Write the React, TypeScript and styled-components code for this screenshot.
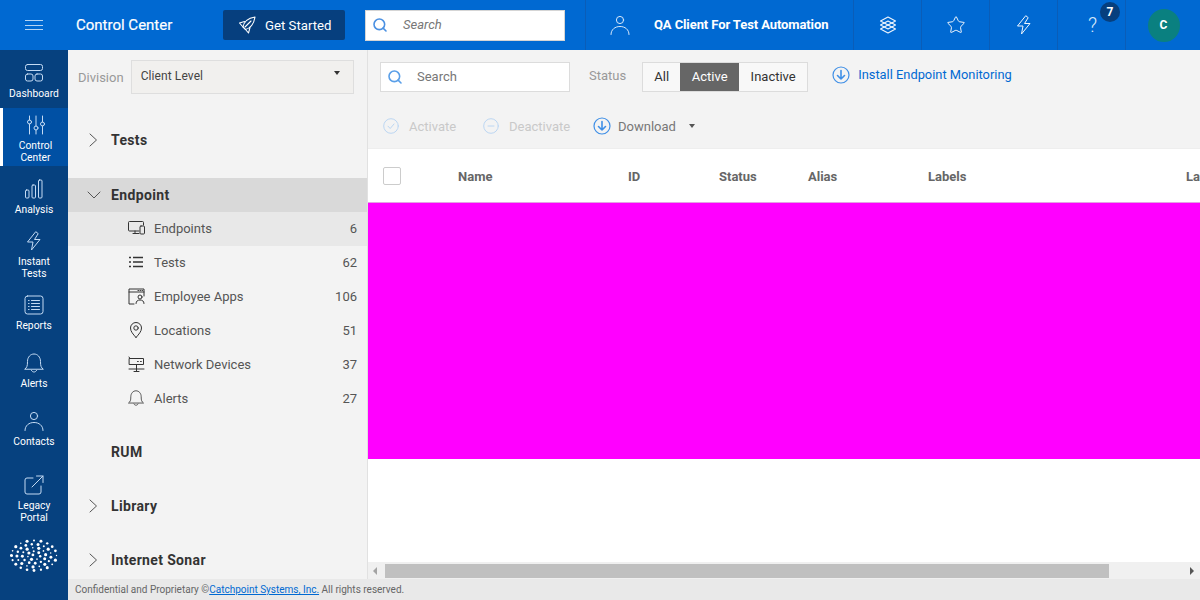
import React from 'react';
import styled, { createGlobalStyle } from 'styled-components';
import { Search, Star } from 'lucide-react';

const GlobalStyle = createGlobalStyle`
  html, body { margin: 0; padding: 0; height: 100%; overflow: hidden; }
  body { font-family: Roboto, "Liberation Sans", sans-serif; font-size: 13px; color: #333; }
  * { box-sizing: border-box; }
`;

const lineProps = { fill: 'none', stroke: 'currentColor', strokeWidth: 1, strokeLinecap: 'round' as const, strokeLinejoin: 'round' as const };

const DashboardIcon = () => (
  <svg width="20" height="20" viewBox="0 0 20 20" {...lineProps}>
    <rect x="1.5" y="1.5" width="17" height="6" rx="2" />
    <rect x="1.5" y="11" width="7.5" height="7" rx="2" />
    <rect x="11" y="11" width="7.5" height="7" rx="2" />
  </svg>
);
const SlidersIcon = () => (
  <svg width="20" height="20" viewBox="0 0 20 20" {...lineProps}>
    <path d="M3.5 1v4M3.5 9v10M10 1v10M10 15v4M16.5 1v6M16.5 11v8" />
    <circle cx="3.5" cy="7" r="2" />
    <circle cx="10" cy="13" r="2" />
    <circle cx="16.5" cy="9" r="2" />
  </svg>
);
const BarsIcon = () => (
  <svg width="20" height="20" viewBox="0 0 20 20" {...lineProps}>
    <rect x="1.5" y="11" width="3.5" height="8" rx="1" />
    <rect x="8" y="6" width="3.5" height="13" rx="1" />
    <rect x="14.5" y="1" width="3.5" height="18" rx="1" />
  </svg>
);
const BoltIcon = () => (
  <svg width="20" height="20" viewBox="0 0 20 20" {...lineProps}>
    <path d="M11.5 1 3.5 11h5.500l-1.500 8 8.500-10.500h-5.500L14 3z" />
  </svg>
);
const ReportIcon = () => (
  <svg width="20" height="20" viewBox="0 0 20 20" {...lineProps}>
    <rect x="1" y="1" width="18" height="18" rx="2.500" />
    <path d="M7.500 5.500h8M7.500 8.500h8M7.500 11.500h8M7.500 14.500h8M4.500 5.500h.6M4.500 8.500h.6M4.500 11.500h.6M4.500 14.500h.6" />
  </svg>
);
const BellIcon = ({ size = 20 }: { size?: number }) => (
  <svg width={size} height={size} viewBox="0 0 20 20" {...lineProps}>
    <path d="M1 16c2-1.500 2.500-3 2.500-7.500C3.500 4 6.500 1 10 1s6.500 3 6.500 7.500c0 4.500.5 6 2.500 7.500z" />
    <path d="M7.500 17.500c.5 1 1.500 1.500 2.500 1.500s2-.5 2.500-1.500" />
  </svg>
);
const UserIcon = ({ size = 20 }: { size?: number }) => (
  <svg width={size} height={size} viewBox="0 0 20 20" {...lineProps}>
    <circle cx="10" cy="5" r="3.600" />
    <path d="M1 19.500c0-5 4-8 9-8s9 3 9 8" />
  </svg>
);
const ExternalIcon = () => (
  <svg width="20" height="20" viewBox="0 0 20 20" {...lineProps}>
    <path d="M9 3H3a2 2 0 0 0-2 2v12a2 2 0 0 0 2 2h12a2 2 0 0 0 2-2v-6" />
    <path d="M8 12 19 1M12.500 1H19v6.500" />
  </svg>
);
const RocketIcon = () => (
  <svg width="18" height="18" viewBox="0 0 18 18" {...lineProps} strokeWidth={1.1}>
    <path d="M17 1C11 2 6 5 5 11l2.500 2.500C13 12 16 7 17 1z" />
    <path d="M6.500 5.500 1.500 7 5 11M12 11.500 10.500 17l-3-3.500M13 5l-6 6" />
  </svg>
);
const LayersIcon = () => (
  <svg width="18" height="18" viewBox="0 0 18 18" {...lineProps} strokeWidth={1.1}>
    <path d="M9 1 16.500 5 9 9 1.500 5z" />
    <path d="M9 5 16.500 9 9 13 1.500 9z" />
    <path d="M9 9 16.500 13 9 17 1.500 13z" />
  </svg>
);
const DeviceIcon = () => (
  <svg width="17" height="14" viewBox="0 0 17 14" {...lineProps}>
    <path d="M11 10H1.500a1 1 0 0 1-1-1V1.500a1 1 0 0 1 1-1h13a1 1 0 0 1 1 1V4M5 12.500h6M7 10v2.500" />
    <rect x="12" y="5" width="4.500" height="8" rx="1" />
  </svg>
);
const ListIcon = () => (
  <svg width="16" height="12" viewBox="0 0 16 12" fill="none" stroke="currentColor" strokeWidth="1.5">
    <path d="M1 1.500h2M5 1.500h10M1 6h2M5 6h10M1 10.500h2M5 10.500h10" />
  </svg>
);
const AppsIcon = () => (
  <svg width="17" height="17" viewBox="0 0 17 17" {...lineProps}>
    <path d="M16 8V1H1v15h5M1 4h15M10 2.500h.5M12 2.500h.5M14 2.500h.5" />
    <circle cx="12" cy="9" r="2" />
    <path d="M8 15.500c0-2.500 1.800-3.500 4-3.500s4 1 4 3.500" />
  </svg>
);
const PinIcon = () => (
  <svg width="16" height="16" viewBox="0 0 16 16" {...lineProps}>
    <path d="M8 15.500C5 12 2.500 9.500 2.500 6a5.500 5.500 0 0 1 11 0c0 3.500-2.500 6-5.500 9.500z" />
    <circle cx="8" cy="6" r="2.200" />
  </svg>
);
const NetworkIcon = () => (
  <svg width="17" height="17" viewBox="0 0 17 17" {...lineProps}>
    <rect x="1.500" y="2.500" width="14" height="6" />
    <path d="M9.500 5.500h.8M12.500 5.500h.8M8.500 8.500V15M1 13h15M6 15.500h5M2 2.500 1 1" />
  </svg>
);
const RightChevron = () => (
  <svg width="12" height="14" viewBox="0 0 12 14" {...lineProps}>
    <path d="M3 1l6.500 6L3 13" />
  </svg>
);
const DownChevron = () => (
  <svg width="14" height="14" viewBox="0 0 14 14" {...lineProps}>
    <path d="M1 4l6 6 6-6" />
  </svg>
);
const DownCircleIcon = () => (
  <svg width="18" height="18" viewBox="0 0 18 18" fill="none" stroke="#3f8fe6" strokeLinecap="round" strokeLinejoin="round">
    <circle cx="9" cy="9" r="8" strokeWidth="1.200" />
    <path d="M9 4.500v8.500M5.500 9.500 9 13l3.500-3.500" strokeWidth="1.600" />
  </svg>
);

const rings = [
  { radius: 1, count: 20 },
  { radius: 0.76, count: 17 },
  { radius: 0.52, count: 12 },
  { radius: 0.28, count: 7 },
  { radius: 0.06, count: 1 },
];

const dots = rings.flatMap((ring, ringIndex) =>
  Array.from({ length: ring.count }, (_, i) => {
    const t = ((i + ringIndex * 0.4) / ring.count) * Math.PI * 2;
    return {
      cx: 24 + Math.cos(t) * ring.radius * 22.500,
      cy: 16.5 + Math.sin(t) * ring.radius * 15,
      r: 0.7 + 0.9 * Math.abs(Math.sin(i * 1.7 + ringIndex)),
    };
  }),
);

const LogoMark = () => (
  <svg width="48" height="33" viewBox="0 0 48 33" fill="#fff">
    {dots.map((d, i) => <circle key={i} cx={d.cx} cy={d.cy} r={d.r} />)}
  </svg>
);

const Page = styled.div`
  width: 1200px;
  height: 600px;
  display: grid;
  grid-template-rows: 50px 1fr;
  overflow: hidden;
`;

const TopBar = styled.header`
  display: flex;
  align-items: center;
  background: #0069d2;
  color: #fff;
`;

const MenuButton = styled.div`
  width: 68px;
  display: flex;
  flex-direction: column;
  gap: 3.500px;
  padding-left: 25px;
  span { display: block; width: 18px; height: 1px; background: #b5d4f4; }
`;

const Title = styled.div`
  width: 147px;
  padding: 0 0 1px 8px;
  font-size: 15px;
  font-weight: 400;
  -webkit-text-stroke: 0.2px #fff;
`;

const StartButton = styled.div`
  width: 122px;
  height: 30px;
  margin-left: 8px;
  border-radius: 2px;
  background: #063f7e;
  display: flex;
  align-items: center;
  padding-left: 15px;
  gap: 9px;
  font-size: 13.2px;
`;

const TopSearch = styled.div`
  width: 200px;
  height: 31px;
  margin-left: 20px;
  background: #fff;
  border: 1px solid #d5d5d5;
  display: flex;
  align-items: center;
  padding: 0 0 1px 6px;
  gap: 15px;
  color: #777;
  font-style: italic;
  font-size: 13px;
  svg { color: #4a90e2; }
`;

const ClientCell = styled.div`
  width: 268px;
  height: 50px;
  margin-left: 20px;
  border-left: 1px solid #0a5db8;
  display: flex;
  align-items: center;
  padding: 0 0 1px 24px;
  gap: 24px;
  font-size: 13px;
  font-weight: 700;
  letter-spacing: -0.1px;
  white-space: nowrap;
  svg { color: #d8e8fa; }
`;

const TopCell = styled.div`
  position: relative;
  width: 68px;
  height: 50px;
  border-left: 1px solid #0a5db8;
  display: flex;
  align-items: center;
  justify-content: center;
  color: #eef5fd;
  font-size: 20px;
  font-weight: 300;
`;

const HelpMark = styled.span`
  margin-left: 2px;
  color: #d8e8fa;
`;

const CountBadge = styled.span`
  position: absolute;
  top: 2px;
  left: 42px;
  width: 20px;
  height: 20px;
  border-radius: 50%;
  background: #063f7e;
  color: #fff;
  font-size: 12px;
  font-weight: 700;
  display: flex;
  align-items: center;
  justify-content: center;
`;

const Avatar = styled.span`
  width: 32px;
  height: 33px;
  margin-left: 8px;
  border-radius: 50%;
  background: #0a8080;
  color: #fff;
  font-size: 12px;
  font-weight: 700;
  display: flex;
  align-items: center;
  justify-content: center;
`;

const Body = styled.div`
  display: grid;
  grid-template-columns: 68px 1fr;
  min-height: 0;
`;

const SideNav = styled.nav`
  background: #06417f;
  display: flex;
  flex-direction: column;
  min-height: 0;
`;

const NavClip = styled.div`
  height: 396px;
  overflow: hidden;
  flex: none;
`;

const NavItem = styled.div<{ $active?: boolean }>`
  height: 58px;
  padding-top: 5px;
  display: flex;
  flex-direction: column;
  align-items: center;
  justify-content: center;
  background: ${(p) => (p.$active ? '#0050a4' : 'transparent')};
  border-left: ${(p) => (p.$active ? '3px solid #fff' : '0')};
  color: #fff;
  font-size: 10.300px;
  line-height: 12px;
  text-align: center;
  svg { color: #c4dbf4; margin-bottom: 5px; }
`;

const LegacyItem = styled(NavItem)`
  margin-top: 22px;
`;

const LogoBox = styled.div`
  margin-top: 13px;
  display: flex;
  justify-content: center;
`;

const RightSide = styled.div`
  display: grid;
  grid-template-rows: 1fr 21px;
  min-height: 0;
  min-width: 0;
`;

const Columns = styled.div`
  display: grid;
  grid-template-columns: 300px 832px;
  min-height: 0;
  overflow: hidden;
`;

const TreePanel = styled.aside`
  background: #f3f3f3;
  border-right: 1px solid #e1e1e1;
  overflow: hidden;
`;

const DivisionRow = styled.div`
  display: flex;
  align-items: center;
  gap: 7px;
  padding: 10px 13px 0 10px;
  color: #999;
  font-size: 13px;
`;

const DivisionSelect = styled.div`
  flex: 1;
  height: 34px;
  background: #f1f0ee;
  border: 1px solid #dedede;
  color: #444;
  font-size: 12px;
  display: flex;
  justify-content: space-between;
  padding: 8px 13px 0 9px;
  letter-spacing: 0.1px;
`;

const Caret = styled.span`
  display: inline-block;
  width: 0;
  height: 0;
  margin-top: 2px;
  border-left: 3px solid transparent;
  border-right: 3px solid transparent;
  border-top: 4px solid #333;
`;

const Tree = styled.div`
  margin-top: 19px;
`;

const TopRow = styled.div<{ $open?: boolean }>`
  height: ${(p) => (p.$open ? '34px' : '54px')};
  margin-top: ${(p) => (p.$open ? '11px' : '0')};
  padding-bottom: ${(p) => (p.$open ? '1px' : '0')};
  background: ${(p) => (p.$open ? '#d9d9d9' : 'transparent')};
  display: grid;
  grid-template-columns: 24px 1fr;
  align-items: center;
  padding-left: 19px;
  color: #333;
  font-size: 14px;
  font-weight: 700;
  letter-spacing: 0.35px;
  svg { color: #555; display: block; }
`;

const PlainRow = styled(TopRow)`
  grid-template-columns: 1fr;
  padding-left: 43px;
  margin-top: 9px;
`;

const SubRow = styled.div<{ $selected?: boolean }>`
  height: 34px;
  background: ${(p) => (p.$selected ? '#e8e8e8' : 'transparent')};
  display: grid;
  grid-template-columns: 26px 1fr auto;
  align-items: center;
  padding: 0 10px 2px 60px;
  color: #555;
  font-size: 13px;
  svg { color: #333; display: block; }
`;

const MainPanel = styled.main`
  display: flex;
  flex-direction: column;
  min-height: 0;
  min-width: 0;
  background: #fff;
`;

const Toolbar = styled.div`
  height: 99px;
  flex: none;
  background: #f3f3f3;
  border-bottom: 1px solid #eee;
  padding: 12px 0 0 12px;
`;

const ToolRow = styled.div`
  display: flex;
  align-items: center;
  height: 30px;
`;

const ToolSearch = styled.div`
  width: 190px;
  height: 30px;
  background: #fff;
  border: 1px solid #dcdcdc;
  display: flex;
  align-items: center;
  padding: 0 0 1px 6px;
  gap: 14px;
  color: #777;
  font-size: 13px;
  svg { color: #5a9fe8; }
`;

const StatusLabel = styled.span`
  margin: 0 16px 3px 19px;
  color: #999;
`;

const Segment = styled.div`
  display: flex;
  height: 30px;
  border: 1px solid #dcdcdc;
  background: #f8f8f8;
`;

const SegmentItem = styled.div<{ $on?: boolean; $w: number }>`
  width: ${(p) => p.$w}px;
  padding-bottom: 2px;
  display: flex;
  align-items: center;
  justify-content: center;
  background: ${(p) => (p.$on ? '#666' : 'transparent')};
  color: ${(p) => (p.$on ? '#fff' : '#333')};
  font-size: 13px;
`;

const InstallLink = styled.a`
  margin: -5px 0 0 24px;
  display: flex;
  align-items: center;
  gap: 8px;
  color: #0069d2;
  font-size: 12.850px;
`;

const ActionRow = styled(ToolRow)`
  margin-top: 19px;
  padding-left: 3px;
`;

const Action = styled.div<{ $off?: boolean; $w: number }>`
  width: ${(p) => p.$w}px;
  display: flex;
  align-items: center;
  gap: ${(p) => (p.$off ? '10px' : '7px')};
  color: ${(p) => (p.$off ? '#c9c9c9' : '#777')};
  font-size: 13px;
  svg { flex: none; }
`;

const RoundIcon = styled.svg`
  color: #bcd6f2;
`;

const DownCaret = styled(Caret)`
  border-top-color: #555;
  margin: 0 0 0 6px;
`;

const TableHead = styled.div`
  height: 53px;
  flex: none;
  padding-top: 1px;
  display: grid;
  grid-template-columns: 15px 75px 170px 91px 89px 120px 258px 40px;
  align-items: center;
  color: #666;
  font-weight: 700;
  font-size: 13px;
  white-space: nowrap;
  overflow: hidden;
`;

const CheckBox = styled.span`
  grid-column: 2;
  width: 18px;
  height: 18px;
  background: #fff;
  border: 1px solid #ccc;
  border-radius: 2px;
`;

const MaskedRows = styled.div`
  height: 257px;
  flex: none;
  background: #ff00ff;
  border-top: 1px solid #e3a3e3;
`;

const EmptyArea = styled.div`
  flex: 1;
`;

const ScrollTrack = styled.div`
  height: 17px;
  flex: none;
  background: #f0f0f0;
  display: flex;
  align-items: center;
  padding-left: 5px;
`;

const ScrollArrow = styled.span<{ $right?: boolean }>`
  width: 0;
  height: 0;
  border-top: 4px solid transparent;
  border-bottom: 4px solid transparent;
  ${(p) => (p.$right ? 'border-left: 4px solid #555; margin-left: 81px;' : 'border-right: 4px solid #a3a3a3;')}
`;

const ScrollThumb = styled.div`
  width: 724px;
  height: 14px;
  margin-left: 8px;
  background: #c0c0c0;
`;

const Footer = styled.footer`
  background: #e9e9e9;
  color: #666;
  font-size: 10px;
  display: flex;
  align-items: center;
  padding-left: 7px;
  white-space: pre;
  a { color: #0069d2; text-decoration: underline; }
`;

const subRows = [
  { label: 'Endpoints', count: 6, icon: <DeviceIcon /> },
  { label: 'Tests', count: 62, icon: <ListIcon /> },
  { label: 'Employee Apps', count: 106, icon: <AppsIcon /> },
  { label: 'Locations', count: 51, icon: <PinIcon /> },
  { label: 'Network Devices', count: 37, icon: <NetworkIcon /> },
  { label: 'Alerts', count: 27, icon: <BellIcon size={16} /> },
];

export default function App() {
  return (
    <Page>
      <GlobalStyle />
      <TopBar>
        <MenuButton><span /><span /><span /></MenuButton>
        <Title>Control Center</Title>
        <StartButton><RocketIcon />Get Started</StartButton>
        <TopSearch><Search size={16} strokeWidth={2.4} />Search</TopSearch>
        <ClientCell><UserIcon />QA Client For Test Automation</ClientCell>
        <TopCell><LayersIcon /></TopCell>
        <TopCell><Star size={20} strokeWidth={1.2} /></TopCell>
        <TopCell><BoltIcon /></TopCell>
        <TopCell><HelpMark>?</HelpMark><CountBadge>7</CountBadge></TopCell>
        <TopCell><Avatar>C</Avatar></TopCell>
      </TopBar>
      <Body>
        <SideNav>
          <NavClip>
            <NavItem><DashboardIcon />Dashboard</NavItem>
            <NavItem $active><SlidersIcon />Control<br />Center</NavItem>
            <NavItem><BarsIcon />Analysis</NavItem>
            <NavItem><BoltIcon />Instant<br />Tests</NavItem>
            <NavItem><ReportIcon />Reports</NavItem>
            <NavItem><BellIcon />Alerts</NavItem>
            <NavItem><UserIcon />Contacts</NavItem>
          </NavClip>
          <LegacyItem><ExternalIcon />Legacy<br />Portal</LegacyItem>
          <LogoBox><LogoMark /></LogoBox>
        </SideNav>
        <RightSide>
          <Columns>
            <TreePanel>
              <DivisionRow>
                Division
                <DivisionSelect>Client Level<Caret /></DivisionSelect>
              </DivisionRow>
              <Tree>
                <TopRow><RightChevron />Tests</TopRow>
                <TopRow $open><DownChevron />Endpoint</TopRow>
                {subRows.map((row, i) => (
                  <SubRow key={row.label} $selected={i === 0}>
                    {row.icon}
                    <span>{row.label}</span>
                    <span>{row.count}</span>
                  </SubRow>
                ))}
                <PlainRow>RUM</PlainRow>
                <TopRow><RightChevron />Library</TopRow>
                <TopRow><RightChevron />Internet Sonar</TopRow>
              </Tree>
            </TreePanel>
            <MainPanel>
              <Toolbar>
                <ToolRow>
                  <ToolSearch><Search size={16} strokeWidth={2.4} />Search</ToolSearch>
                  <StatusLabel>Status</StatusLabel>
                  <Segment>
                    <SegmentItem $w={37}>All</SegmentItem>
                    <SegmentItem $w={59} $on>Active</SegmentItem>
                    <SegmentItem $w={68}>Inactive</SegmentItem>
                  </Segment>
                  <InstallLink><DownCircleIcon />Install Endpoint Monitoring</InstallLink>
                </ToolRow>
                <ActionRow>
                  <Action $off $w={100}>
                    <RoundIcon width="16" height="16" viewBox="0 0 16 16" {...lineProps}>
                      <circle cx="8" cy="8" r="7.300" />
                      <path d="M5 8.200 7.200 10.500 11 6" />
                    </RoundIcon>
                    Activate
                  </Action>
                  <Action $off $w={110}>
                    <RoundIcon width="16" height="16" viewBox="0 0 16 16" {...lineProps}>
                      <circle cx="8" cy="8" r="7.300" />
                      <path d="M5 8h6" />
                    </RoundIcon>
                    Deactivate
                  </Action>
                  <Action $w={110}>
                    <DownCircleIcon />Download<DownCaret />
                  </Action>
                </ActionRow>
              </Toolbar>
              <TableHead>
                <CheckBox />
                <span>Name</span>
                <span>ID</span>
                <span>Status</span>
                <span>Alias</span>
                <span>Labels</span>
                <span>Last</span>
              </TableHead>
              <MaskedRows />
              <EmptyArea />
              <ScrollTrack>
                <ScrollArrow />
                <ScrollThumb />
                <ScrollArrow $right />
              </ScrollTrack>
            </MainPanel>
          </Columns>
          <Footer>Confidential and Proprietary ©<a>Catchpoint Systems, Inc.</a> All rights reserved.</Footer>
        </RightSide>
      </Body>
    </Page>
  );
}
